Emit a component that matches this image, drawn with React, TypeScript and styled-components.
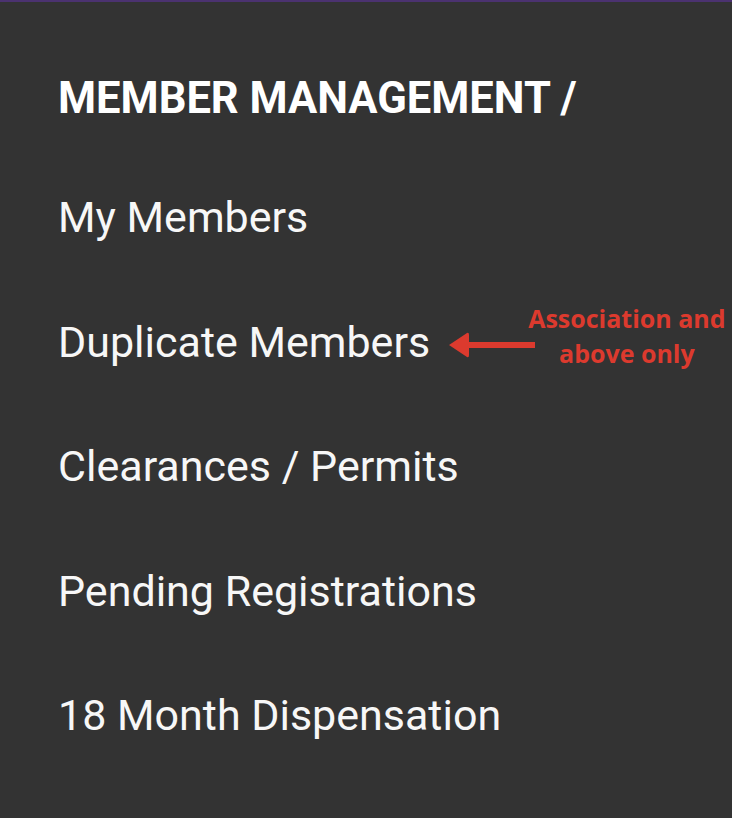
import styled, { createGlobalStyle } from 'styled-components';

const GlobalStyle = createGlobalStyle`
  html, body {
    margin: 0;
    padding: 0;
    background-color: #333333;
  }
  body {
    font-family: Roboto, "Liberation Sans", Arial, sans-serif;
  }
`;

const items = ['My Members', 'Clearances / Permits', 'Pending Registrations', '18 Month Dispensation'];

const App = () => {
  return (
    <Page>
      <GlobalStyle />
      <TopLine />
      <Menu>
        <Heading>MEMBER MANAGEMENT /</Heading>
        <ItemList>
          <Item>{items[0]}</Item>
          <Row>
            <Item>Duplicate Members</Item>
            <Arrow width="88" height="30" viewBox="0 0 88 30">
              <path d="M2 15 L20 3 Q22 2 22 5 L22 12 L88 12 L88 18 L22 18 L22 25 Q22 28 20 27 Z" fill="#dc3a2e" />
            </Arrow>
            <Note>
              Association and
              <br />
              above only
            </Note>
          </Row>
          {items.slice(1).map((item) => (
            <Item key={item}>{item}</Item>
          ))}
        </ItemList>
      </Menu>
    </Page>
  );
};

export default App;

const Page = styled.div`
  width: 732px;
  height: 818px;
  background-color: #333333;
  overflow: hidden;
`;

const TopLine = styled.div`
  height: 2px;
  background-color: #4b3270;
`;

const Menu = styled.div`
  display: flex;
  flex-direction: column;
  padding: 75px 0 0 58px;
`;

const Heading = styled.div`
  font-size: 43.5px;
  font-weight: 700;
  line-height: 44px;
  color: #ffffff;
`;

const ItemList = styled.div`
  display: flex;
  flex-direction: column;
  gap: 81.5px;
  margin-top: 75px;
`;

const Row = styled.div`
  display: flex;
  align-items: center;
  height: 43px;
`;

const Item = styled.div`
  font-size: 43px;
  line-height: 43px;
  color: #f7f7f7;
  white-space: nowrap;
`;

const Arrow = styled.svg`
  flex: none;
  margin-left: 17px;
  margin-top: 6px;
`;

const Note = styled.div`
  font-family: "Open Sans", "Liberation Sans", sans-serif;
  font-size: 25px;
  font-weight: 700;
  line-height: 35px;
  color: #dc3a2e;
  text-align: center;
  white-space: nowrap;
  margin-left: -7px;
  margin-top: -12px;
`;
